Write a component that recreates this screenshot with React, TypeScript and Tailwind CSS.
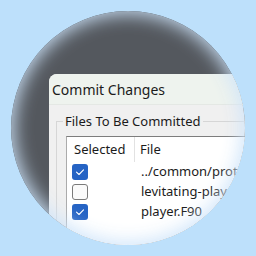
const rows = [
  { name: "../common/proto", checked: true },
  { name: "levitating-player.F90", checked: false },
  { name: "player.F90", checked: true },
];

function Check({ checked }: { checked: boolean }) {
  if (!checked) {
    return <div className="w-4 h-4 rounded-[3px] border border-[#7a7a7a] bg-[#fafafa]" />;
  }
  return (
    <div className="w-4 h-4 rounded-[3px] bg-[#2563c4] flex items-center justify-center">
      <svg width="10" height="10" viewBox="0 0 10 10" fill="none">
        <path d="M1.5 5.2 L4 7.5 L8.5 2.8" stroke="white" strokeWidth="1.1" strokeLinecap="round" strokeLinejoin="round" />
      </svg>
    </div>
  );
}

export default function App() {
  return (
    <div
      className="w-[256px] h-[256px] bg-[#bde0fb] flex items-center justify-center text-[#1b1b1b]"
      style={{ fontFamily: '"Noto Sans", "Liberation Sans", sans-serif' }}
    >
      <div className="relative w-[234px] h-[234px] rounded-full overflow-hidden bg-[#54585e]">
        <div className="pt-[63px] pl-[38px]">
          <div className="w-[260px] rounded-tl-[8px] overflow-hidden bg-[#f0f0f0]">
            <div className="h-[31px] bg-[#eef3ee] pl-[3px] flex items-center text-[14px] border-b border-[#e4e8e4]">
              Commit Changes
            </div>
            <div className="pt-[8px] pl-[7px] h-[200px]">
              <fieldset className="border border-[#d6d6d6] pl-[6px] pb-2 h-[180px]">
                <legend className="px-[2px] text-[13px] leading-[16px]">Files To Be Committed</legend>
                <div className="mt-[7px] ml-[3px] bg-white border border-[#ababab] border-t-[#7d7d7d] h-[150px] text-[13px]">
                  <div className="flex h-[25px] items-center">
                    <div className="w-[68px] h-full pl-[7px] flex items-center border-r border-[#e2e2e2]">Selected</div>
                    <div className="pl-[5px]">File</div>
                  </div>
                  {rows.map((r) => (
                    <div key={r.name} className="flex h-[20px] items-center">
                      <div className="w-[68px] pl-[5px] flex items-center">
                        <Check checked={r.checked} />
                      </div>
                      <div className="pl-[6px] whitespace-nowrap">{r.name}</div>
                    </div>
                  ))}
                </div>
              </fieldset>
            </div>
          </div>
        </div>
        <div className="absolute inset-0 rounded-full shadow-[inset_0_0_18px_3px_rgba(205,228,250,0.95)]" />
      </div>
    </div>
  );
}
